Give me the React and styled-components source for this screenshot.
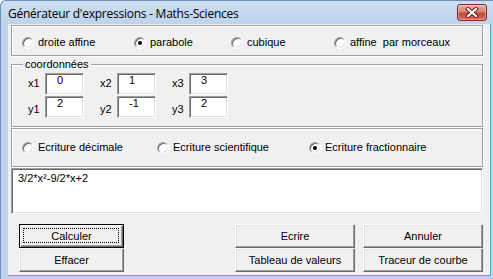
import React from 'react';
import styled, { createGlobalStyle } from 'styled-components';

const GlobalStyle = createGlobalStyle`
  html, body {
    margin: 0;
    padding: 0;
    background: #fff;
  }
  body {
    font-family: "Liberation Sans", Arial, sans-serif;
    font-size: 11px;
    color: #000;
    overflow: hidden;
  }
`;

const Window = styled.div`
  width: 493px;
  height: 279px;
  box-sizing: border-box;
  display: flex;
  flex-direction: column;
  padding-left: 7px;
  border-top: 1px solid #6f8fb2;
  border-left: 1px solid #6f8fb2;
  border-top-left-radius: 6px;
  background: linear-gradient(#cddff2, #bcd3eb 24px, #bdd4ec);
`;

const TitleBar = styled.div`
  height: 23px;
  flex: none;
  display: flex;
  justify-content: space-between;
  align-items: flex-start;
  padding-right: 6px;
`;

const Title = styled.div`
  font-family: "Open Sans", "Liberation Sans", sans-serif;
  font-size: 12px;
  letter-spacing: -0.25px;
  line-height: 16px;
  margin-top: 5px;
`;

const CloseButton = styled.div`
  width: 30px;
  height: 17px;
  box-sizing: border-box;
  margin-top: 3px;
  border: 1px solid #7d2a20;
  border-radius: 3px;
  background: linear-gradient(#eab1a6, #d98473 45%, #c24a35 55%, #d0705a);
  box-shadow: inset 0 0 0 1px rgba(255, 255, 255, 0.35);
  display: flex;
  align-items: center;
  justify-content: center;
`;

const Client = styled.div`
  width: 483px;
  height: 252px;
  flex: none;
  display: flex;
  flex-direction: column;
  box-sizing: border-box;
  padding: 1px 7px 0 3px;
  background: #f0f0f0;
  border-right: 1px solid #4ea6e4;
  border-bottom: 1px solid #4ea6e4;
  overflow: hidden;
`;

const Frame = styled.div`
  height: ${p => p.$h}px;
  flex: none;
  box-sizing: border-box;
  border: 1px solid #a0a0a0;
  box-shadow: inset 1px 1px 0 #fff, 1px 1px 0 #fff;
  margin-top: ${p => p.$mt || 0}px;
  padding: ${p => p.$pad};
`;

const RadioRow = styled.div`
  display: grid;
  height: 100%;
  grid-template-columns: ${p => p.$cols};
  align-items: ${p => (p.$center ? 'center' : 'start')};
`;

const RadioItem = styled.div`
  display: flex;
  align-items: center;
  gap: 4px;
  white-space: pre;
  line-height: 13px;
`;

const RadioCircle = styled.span`
  width: 12px;
  height: 12px;
  box-sizing: border-box;
  border-radius: 50%;
  border: 1px solid;
  border-color: #a0a0a0 #fff #fff #a0a0a0;
  box-shadow: inset 1px 1px 0 #696969, inset -1px -1px 0 #e3e3e3;
  background: #fff;
  display: flex;
  align-items: center;
  justify-content: center;
  flex: none;
  &::after {
    content: '';
    width: 4px;
    height: 4px;
    border-radius: 50%;
    background: ${p => (p.$on ? '#000' : 'transparent')};
  }
`;

const Group = styled.fieldset`
  margin: 1px 0 0 0;
  flex: none;
  min-width: 0;
  border: 1px solid #a0a0a0;
  box-shadow: inset 1px 1px 0 #fff, 1px 1px 0 #fff;
  padding: 2px 0 8px 16px;
`;

const Legend = styled.legend`
  margin-left: -5px;
  padding: 0 2px;
  line-height: 14px;
  background: #f0f0f0;
`;

const CoordRows = styled.div`
  display: flex;
  flex-direction: column;
  gap: 1px;
`;

const CoordRow = styled.div`
  display: flex;
  height: 22px;
`;

const CoordCell = styled.div`
  display: flex;
  margin-right: ${p => (p.$last ? 0 : 16)}px;
`;

const CoordLabel = styled.span`
  width: 17px;
  line-height: 13px;
  padding-top: ${p => p.$top}px;
`;

const TextBox = styled.div`
  width: 39px;
  height: 22px;
  box-sizing: border-box;
  background: #fff;
  border: 1px solid;
  border-color: #a0a0a0 #fff #fff #a0a0a0;
  box-shadow: inset 1px 1px 0 #696969, inset -1px -1px 0 #e3e3e3;
  padding: 1px 0 0 11px;
  line-height: 11px;
`;

const Output = styled.div`
  height: 46px;
  flex: none;
  box-sizing: border-box;
  margin-top: 1px;
  background: #fff;
  border: 1px solid;
  border-color: #a0a0a0 #fff #fff #a0a0a0;
  box-shadow: inset 1px 1px 0 #696969, inset -1px -1px 0 #e3e3e3;
  padding: 3px 6px;
  line-height: 13px;
`;

const ButtonBar = styled.div`
  display: flex;
  margin-top: 10px;
  padding-left: 8px;
  gap: 8px;
`;

const ButtonColumn = styled.div`
  display: flex;
  flex-direction: column;
  margin-right: ${p => (p.$push ? 'auto' : 0)};
`;

const Button = styled.div`
  position: relative;
  width: ${p => p.$w}px;
  height: 24px;
  box-sizing: border-box;
  display: flex;
  align-items: center;
  justify-content: center;
  background: #f0f0f0;
  border: 1px solid;
  border-color: ${p => (p.$default ? '#000' : '#fff #696969 #696969 #fff')};
  box-shadow: ${p =>
    p.$default
      ? 'inset 1px 1px 0 #fff, inset -1px -1px 0 #696969, inset -2px -2px 0 #a0a0a0'
      : 'inset -1px -1px 0 #a0a0a0, inset 1px 1px 0 #e3e3e3'};
  line-height: 13px;
  ${p =>
    p.$default &&
    `&::after {
      content: '';
      position: absolute;
      left: 3px;
      top: 3px;
      right: 4px;
      bottom: 4px;
      border: 1px dotted #000;
    }`}
`;

const Radio = ({ label, on }) => (
  <RadioItem>
    <RadioCircle $on={on} />
    {label}
  </RadioItem>
);

const coords = [
  ['x1', '0', 'x2', '1', 'x3', '3'],
  ['y1', '2', 'y2', '-1', 'y3', '2'],
];

export default function App() {
  return (
    <>
      <GlobalStyle />
      <Window>
        <TitleBar>
          <Title>Générateur d'expressions - Maths-Sciences</Title>
          <CloseButton>
            <svg width="14" height="11" viewBox="0 0 14 11">
              <path
                d="M3 2 L11 9 M11 2 L3 9"
                stroke="#5a1a12"
                strokeWidth="4"
                strokeLinecap="square"
              />
              <path
                d="M3 2 L11 9 M11 2 L3 9"
                stroke="#fff"
                strokeWidth="2.2"
                strokeLinecap="square"
              />
            </svg>
          </CloseButton>
        </TitleBar>
        <Client>
          <Frame $h={31} $pad="10px 0 0 10px">
            <RadioRow $cols="112px 97px 103px auto">
              <Radio label="droite affine" />
              <Radio label="parabole" on />
              <Radio label="cubique" />
              <Radio label="affine  par morceaux" />
            </RadioRow>
          </Frame>
          <Group>
            <Legend>coordonnées</Legend>
            <CoordRows>
              {coords.map((row, r) => (
                <CoordRow key={r}>
                  {[0, 2, 4].map(i => (
                    <CoordCell key={i} $last={i === 4}>
                      <CoordLabel $top={r === 0 ? 4 : 7}>{row[i]}</CoordLabel>
                      <TextBox>{row[i + 1]}</TextBox>
                    </CoordCell>
                  ))}
                </CoordRow>
              ))}
            </CoordRows>
          </Group>
          <Frame $h={39} $mt={1} $pad="0 0 0 10px">
            <RadioRow $cols="135px 152px auto" $center>
              <Radio label="Ecriture décimale" />
              <Radio label="Ecriture scientifique" />
              <Radio label="Ecriture fractionnaire" on />
            </RadioRow>
          </Frame>
          <Output>3/2*x²-9/2*x+2</Output>
          <ButtonBar>
            <ButtonColumn $push>
              <Button $w={105} $default>Calculer</Button>
              <Button $w={105}>Effacer</Button>
            </ButtonColumn>
            <ButtonColumn>
              <Button $w={120}>Ecrire</Button>
              <Button $w={120}>Tableau de valeurs</Button>
            </ButtonColumn>
            <ButtonColumn>
              <Button $w={120}>Annuler</Button>
              <Button $w={120}>Traceur de courbe</Button>
            </ButtonColumn>
          </ButtonBar>
        </Client>
      </Window>
    </>
  );
}
